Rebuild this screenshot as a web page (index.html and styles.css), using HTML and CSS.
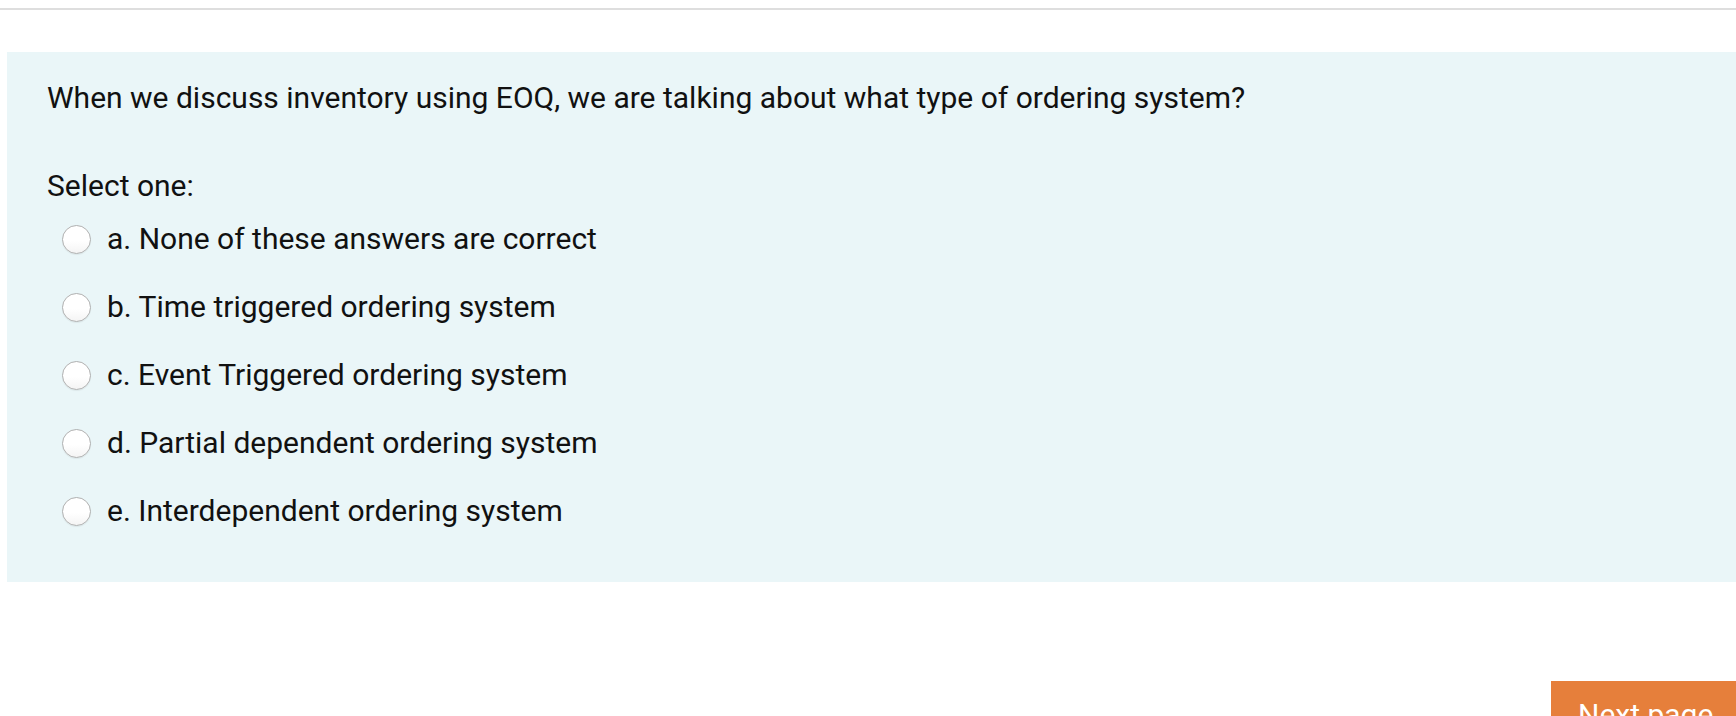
FILE: index.html
```html
<!DOCTYPE html>
<html>
<head>
<meta charset="utf-8">
<link rel="stylesheet" href="styles.css">
</head>
<body>
<div class="page">
  <div class="topbar"></div>
  <div class="content">
    <div class="formulation">
      <div class="qtext">When we discuss inventory using EOQ, we are talking about what type of ordering system?</div>
      <div class="prompt">Select one:</div>
      <div class="answers">
        <label class="answer"><span class="radio"></span><span class="label">a. None of these answers are correct</span></label>
        <label class="answer"><span class="radio"></span><span class="label">b. Time triggered ordering system</span></label>
        <label class="answer"><span class="radio"></span><span class="label">c. Event Triggered ordering system</span></label>
        <label class="answer"><span class="radio"></span><span class="label">d. Partial dependent ordering system</span></label>
        <label class="answer"><span class="radio"></span><span class="label">e. Interdependent ordering system</span></label>
      </div>
    </div>
    <div class="footer">
      <button class="next">Next page</button>
    </div>
  </div>
</div>
</body>
</html>
```
FILE: styles.css
```css
html, body {
  margin: 0;
  padding: 0;
  background: #ffffff;
  overflow: hidden;
}
body {
  font-family: Roboto, "Liberation Sans", sans-serif;
  color: #111111;
  font-size: 30px;
}
.page {
  width: 1760px;
  height: 716px;
  overflow: hidden;
}
.topbar {
  height: 8px;
  border-bottom: 2px solid #dedede;
}
.content {
  margin-top: 42px;
  padding-left: 7px;
}
.formulation {
  background: #eaf6f8;
  padding: 23px 40px 36px 40px;
  height: 530px;
  box-sizing: border-box;
}
.qtext {
  line-height: 45px;
}
.prompt {
  margin-top: 43px;
  line-height: 45px;
}
.answers {
  display: flex;
  flex-direction: column;
  margin-top: -3px;
}
.answer {
  display: flex;
  align-items: center;
  height: 68px;
  padding-left: 15px;
}
.radio {
  width: 27px;
  height: 27px;
  border-radius: 50%;
  border: 1px solid #b0b0b0;
  background: linear-gradient(#ffffff 55%, #f4f4f4);
  box-shadow: 0 1px 1px rgba(0,0,0,0.06);
  flex: none;
}
.label {
  margin-left: 16px;
  line-height: 40px;
}
.footer {
  display: flex;
  justify-content: flex-end;
  margin-top: 99px;
}
.next {
  font-family: Roboto, "Liberation Sans", sans-serif;
  font-size: 30px;
  color: #ffffff;
  background: #e67f3b;
  border: none;
  width: 209px;
  height: 60px;
  padding: 14px 0 0 27px;
  text-align: left;
  line-height: 40px;
  box-sizing: border-box;
  display: flex;
  align-items: flex-start;
}
```
